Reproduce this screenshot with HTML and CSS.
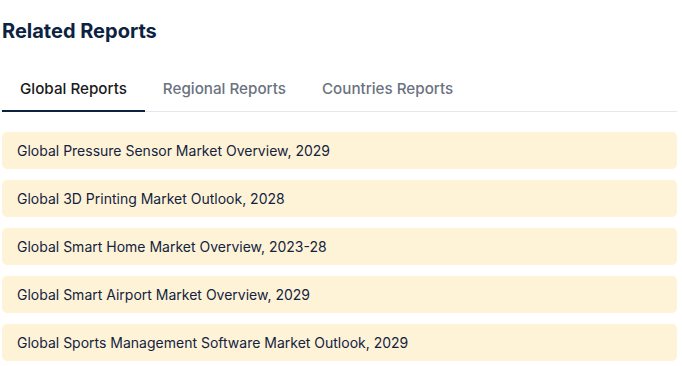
FILE: index.html
```html
<!DOCTYPE html>
<html lang="en">
<head>
  <meta charset="UTF-8">
  <title>Related Reports</title>
  <link rel="stylesheet" href="styles.css">
</head>
<body>
  <div class="related">
    <h2 class="related-title">Related Reports</h2>

    <div class="tabs">
      <button class="tab active">Global Reports</button>
      <button class="tab">Regional Reports</button>
      <button class="tab">Countries Reports</button>
    </div>

    <div class="report-list">
      <a class="report" href="#">Global Pressure Sensor Market Overview, 2029</a>
      <a class="report" href="#">Global 3D Printing Market Outlook, 2028</a>
      <a class="report" href="#">Global Smart Home Market Overview, 2023-28</a>
      <a class="report" href="#">Global Smart Airport Market Overview, 2029</a>
      <a class="report" href="#">Global Sports Management Software Market Outlook, 2029</a>
    </div>
  </div>
</body>
</html>
```

FILE: styles.css
```css
body {
  margin: 0;
  font-family: Inter, "Noto Sans", sans-serif;
  background-color: white;
}

.related {
  padding: 0 5px 0 2px;
}

.related-title {
  margin: 0;
  padding-top: 18px;
  font-size: 20px;
  font-weight: 700;
  color: #0b2341;
  line-height: 26px;
}

.tabs {
  display: flex;
  margin-top: 35px;
  border-bottom: 1px solid #e5e7eb;
}

.tab {
  background: none;
  border: none;
  border-bottom: 2px solid transparent;
  margin-bottom: -1px;
  padding: 0 18px 11px;
  font-family: inherit;
  font-size: 15.2px;
  font-weight: 500;
  line-height: 20px;
  color: #6b7280;
  cursor: pointer;
}

.tab.active {
  color: #1a1a1a;
  border-bottom-color: #0b2341;
}

.report-list {
  display: flex;
  flex-direction: column;
  gap: 11px;
  margin-top: 20px;
}

.report {
  display: block;
  background-color: #fef3d7;
  border-radius: 5px;
  padding: 9px 15px;
  font-size: 14px;
  line-height: 19px;
  color: #13233f;
  text-decoration: none;
}
```
